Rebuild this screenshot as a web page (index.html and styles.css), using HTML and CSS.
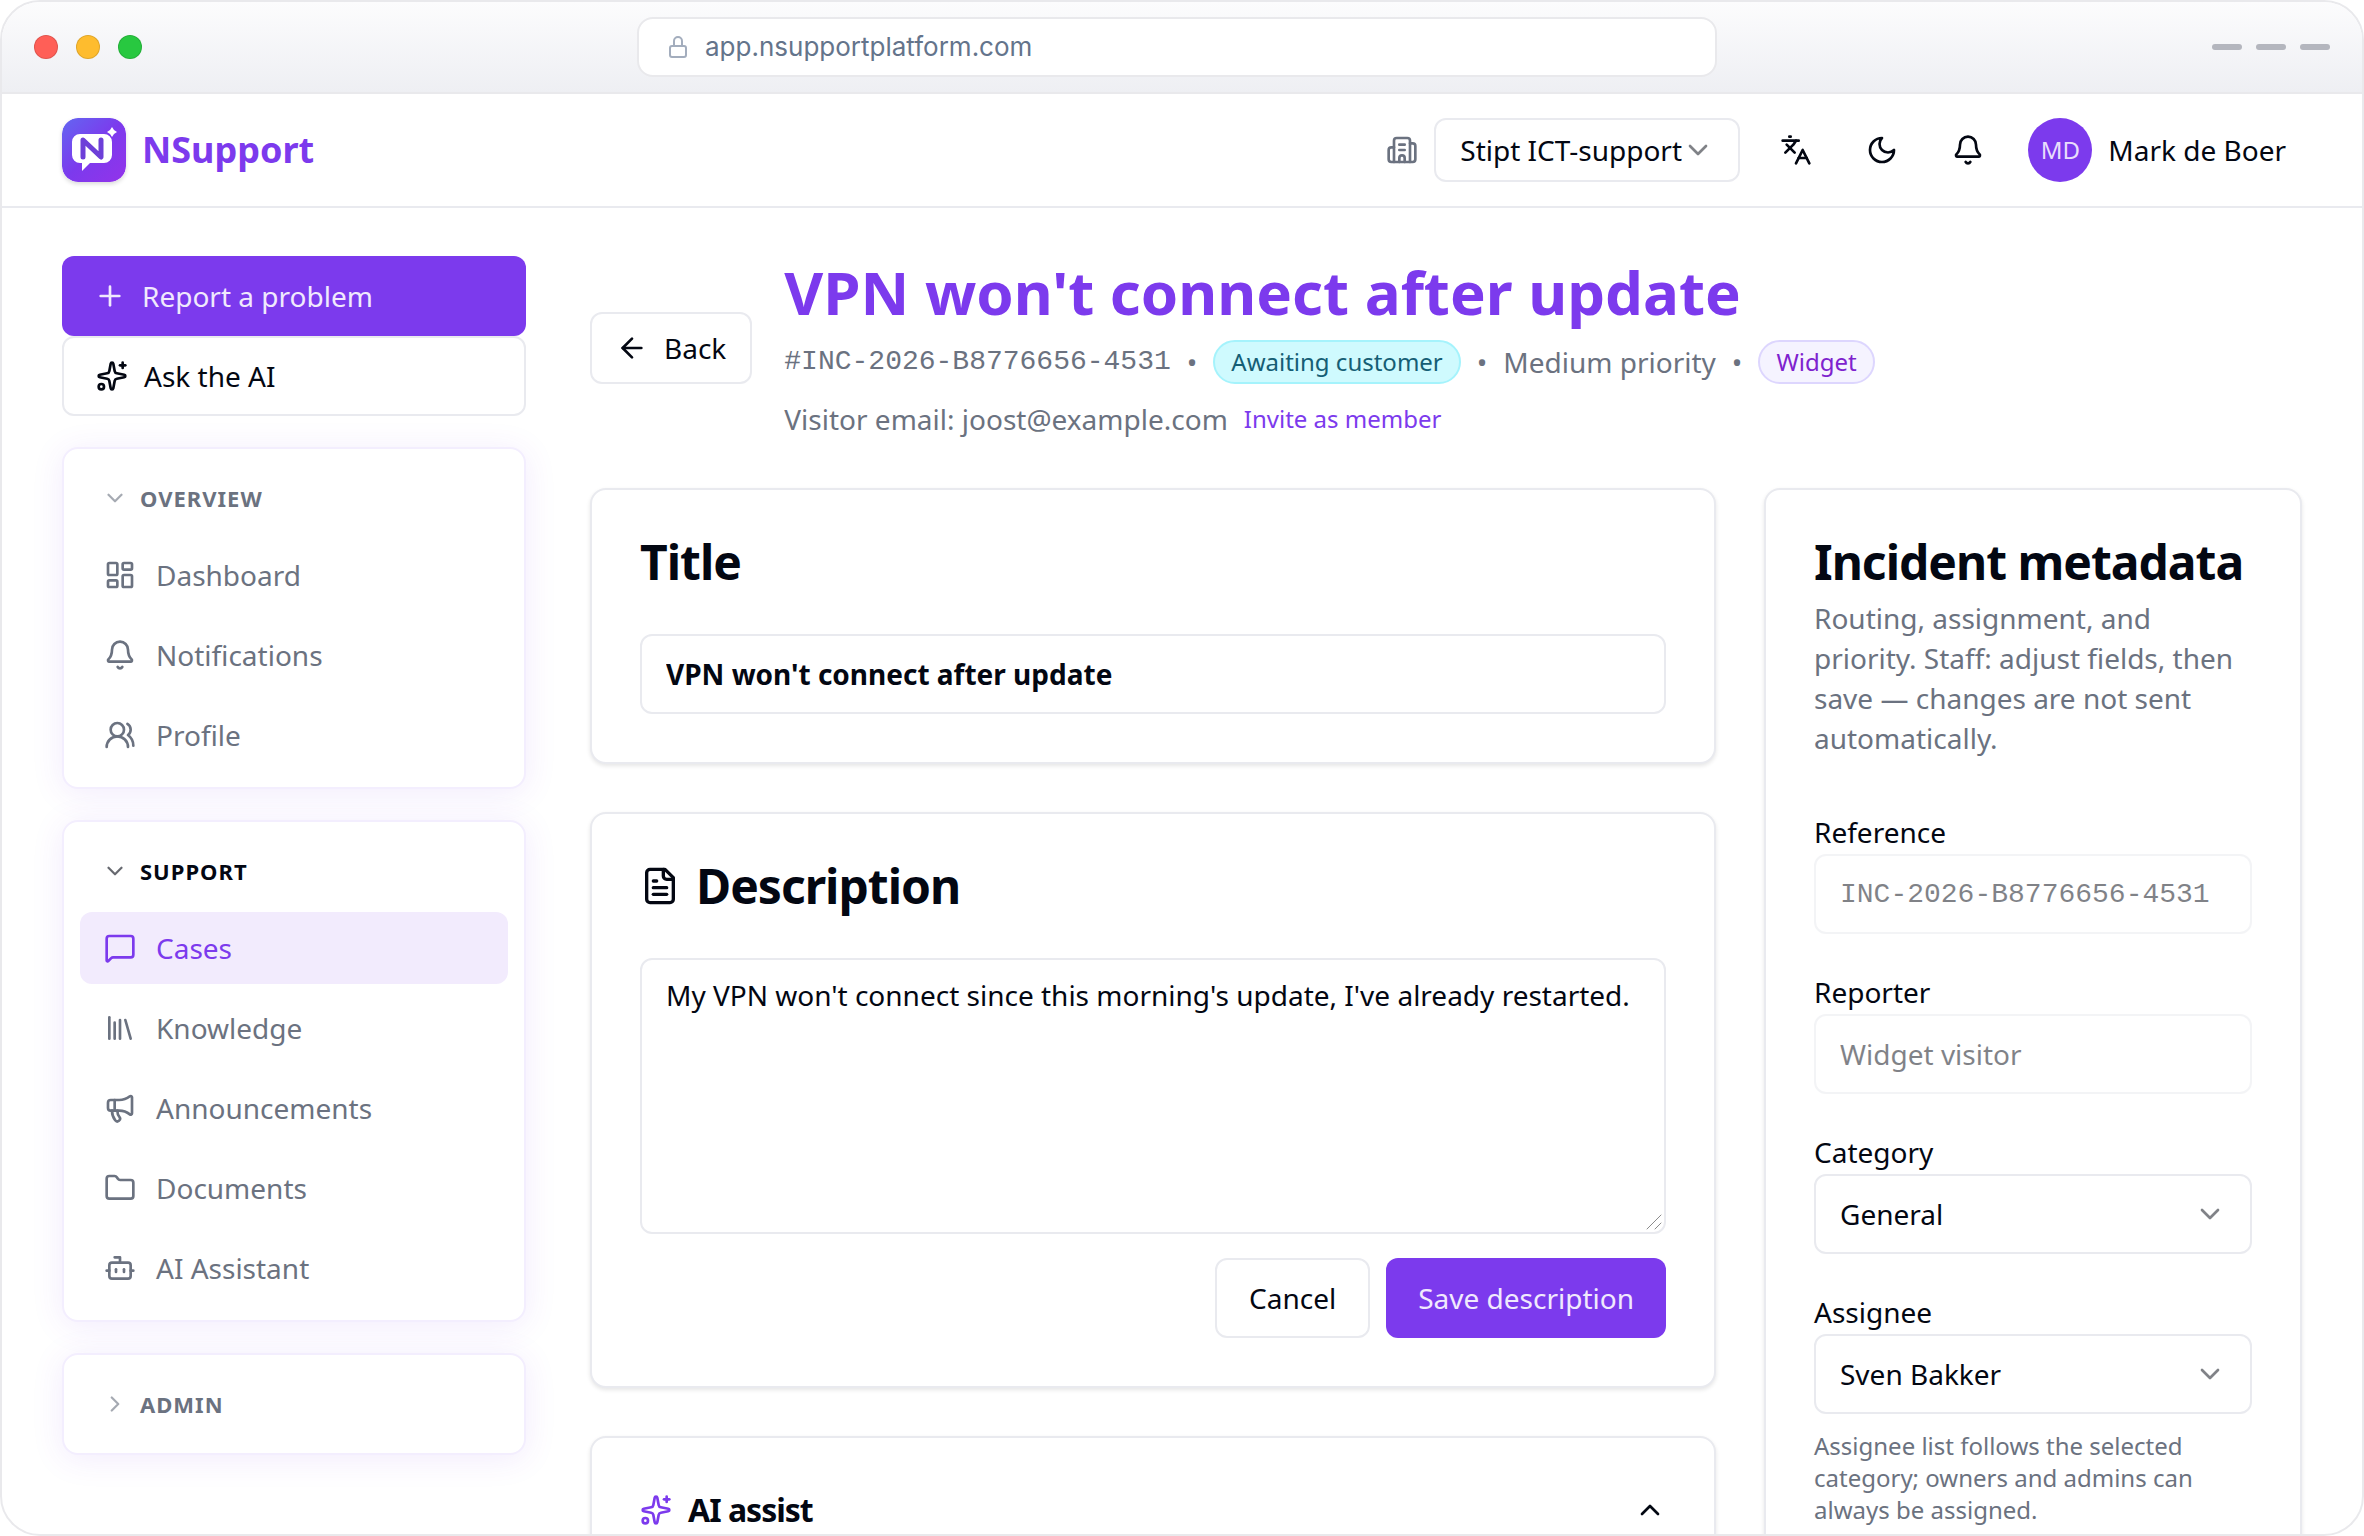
FILE: index.html
```html
<!DOCTYPE html>
<html lang="en">
<head>
    <meta charset="UTF-8">
    <meta name="viewport" content="width=device-width, initial-scale=1.0">
    <title>VPN won't connect after update - NSupport</title>
    <link rel="stylesheet" href="styles.css">
</head>
<body>

    <!-- shared icons -->
    <svg class="sprite" aria-hidden="true">
        <symbol id="i-down" viewBox="0 0 24 24"><path d="m6 9 6 6 6-6"/></symbol>
        <symbol id="i-right" viewBox="0 0 24 24"><path d="m9 18 6-6-6-6"/></symbol>
        <symbol id="i-up" viewBox="0 0 24 24"><path d="m18 15-6-6-6 6"/></symbol>
        <symbol id="i-bell" viewBox="0 0 24 24"><path d="M10.268 21a2 2 0 0 0 3.464 0"/><path d="M3.262 15.326A1 1 0 0 0 4 17h16a1 1 0 0 0 .74-1.673C19.41 13.956 18 12.499 18 8A6 6 0 0 0 6 8c0 4.499-1.411 5.956-2.738 7.326"/></symbol>
        <symbol id="i-sparkles" viewBox="0 0 24 24"><path d="M11.017 2.814a1 1 0 0 1 1.966 0l1.051 5.558a2 2 0 0 0 1.594 1.594l5.558 1.051a1 1 0 0 1 0 1.966l-5.558 1.051a2 2 0 0 0-1.594 1.594l-1.051 5.558a1 1 0 0 1-1.966 0l-1.051-5.558a2 2 0 0 0-1.594-1.594l-5.558-1.051a1 1 0 0 1 0-1.966l5.558-1.051a2 2 0 0 0 1.594-1.594z"/><path d="M20 2v4"/><path d="M22 4h-4"/><circle cx="4" cy="20" r="2"/></symbol>
    </svg>

    <div class="window">
        <div class="titlebar">
            <div class="lights">
                <span class="light red"></span>
                <span class="light yellow"></span>
                <span class="light green"></span>
            </div>
            <div class="address">
                <svg class="lock" viewBox="0 0 18 22" aria-hidden="true"><rect x="1" y="10" width="16" height="11" rx="2"/><path d="M5 10V5a4 4 0 0 1 8 0v5"/></svg>
                <span>app.nsupportplatform.com</span>
            </div>
            <div class="dashes"><span></span><span></span><span></span></div>
        </div>

        <header class="topbar">
            <a class="brand" href="#">
                <svg class="logo" viewBox="0 0 64 64" aria-hidden="true">
                    <defs>
                        <linearGradient id="logoFill" x1="0" y1="0" x2="1" y2="1">
                            <stop offset="0" stop-color="#6366f1"/>
                            <stop offset="0.5" stop-color="#7c3aed"/>
                            <stop offset="1" stop-color="#9333ea"/>
                        </linearGradient>
                    </defs>
                    <rect width="64" height="64" rx="16" fill="url(#logoFill)"/>
                    <path d="M18 16h24a8 8 0 0 1 8 8v13a8 8 0 0 1-8 8H28l-8 8v-8h-2a8 8 0 0 1-8-8V24a8 8 0 0 1 8-8z" fill="#fff"/>
                    <path d="M21 39V22l18 17V22" fill="none" stroke="#6d3fd8" stroke-width="5" stroke-linecap="round" stroke-linejoin="round"/>
                    <path d="M50 9l2 3 3 2-3 2-2 3-2-3-3-2 3-2z" fill="#fff"/>
                </svg>
                NSupport
            </a>
            <div class="tools">
                <svg class="icon muted" viewBox="0 0 24 24" aria-hidden="true"><path d="M10 12h4"/><path d="M10 8h4"/><path d="M14 21v-3a2 2 0 0 0-4 0v3"/><path d="M6 10H4a2 2 0 0 0-2 2v7a2 2 0 0 0 2 2h16a2 2 0 0 0 2-2V9a2 2 0 0 0-2-2h-2"/><path d="M6 21V5a2 2 0 0 1 2-2h8a2 2 0 0 1 2 2v16"/></svg>
                <div class="select org">
                    <select aria-label="Organisation"><option>Stipt ICT-support</option></select>
                    <svg class="icon faint"><use href="#i-down"/></svg>
                </div>
                <button class="tool" aria-label="Language"><svg class="icon" viewBox="0 0 24 24"><path d="m5 8 6 6"/><path d="m4 14 6-6 2-3"/><path d="M2 5h12"/><path d="M7 2h1"/><path d="m22 22-5-10-5 10"/><path d="M14 18h6"/></svg></button>
                <button class="tool" aria-label="Dark mode"><svg class="icon" viewBox="0 0 24 24"><path d="M12 3a6 6 0 0 0 9 9 9 9 0 1 1-9-9Z"/></svg></button>
                <button class="tool" aria-label="Notifications"><svg class="icon"><use href="#i-bell"/></svg></button>
                <button class="user"><span class="avatar">MD</span>Mark de Boer</button>
            </div>
        </header>

        <div class="layout">
            <aside class="sidebar">
                <div class="actions">
                    <button class="btn primary"><svg class="icon" viewBox="0 0 24 24"><path d="M5 12h14"/><path d="M12 5v14"/></svg>Report a problem</button>
                    <button class="btn"><svg class="icon"><use href="#i-sparkles"/></svg>Ask the AI</button>
                </div>

                <nav class="group">
                    <button class="group-head"><svg class="chev"><use href="#i-down"/></svg>OVERVIEW</button>
                    <a class="item" href="#"><svg class="icon" viewBox="0 0 24 24"><rect width="7" height="9" x="3" y="3" rx="1"/><rect width="7" height="5" x="14" y="3" rx="1"/><rect width="7" height="9" x="14" y="12" rx="1"/><rect width="7" height="5" x="3" y="16" rx="1"/></svg>Dashboard</a>
                    <a class="item" href="#"><svg class="icon"><use href="#i-bell"/></svg>Notifications</a>
                    <a class="item" href="#"><svg class="icon" viewBox="0 0 24 24"><path d="M18 21a8 8 0 0 0-16 0"/><circle cx="10" cy="8" r="5"/><path d="M22 20c0-3.370-2-6.500-4-8a5 5 0 0 0-.45-8.300"/></svg>Profile</a>
                </nav>

                <nav class="group">
                    <button class="group-head current"><svg class="chev"><use href="#i-down"/></svg>SUPPORT</button>
                    <a class="item active" href="#"><svg class="icon" viewBox="0 0 24 24"><path d="M22 17a2 2 0 0 1-2 2H6.828a2 2 0 0 0-1.414.586l-2.202 2.202A.71.71 0 0 1 2 21.286V5a2 2 0 0 1 2-2h16a2 2 0 0 1 2 2z"/></svg>Cases</a>
                    <a class="item" href="#"><svg class="icon" viewBox="0 0 24 24"><path d="m16 6 4 14"/><path d="M12 6v14"/><path d="M8 8v12"/><path d="M4 4v16"/></svg>Knowledge</a>
                    <a class="item" href="#"><svg class="icon" viewBox="0 0 24 24"><path d="M11 6a13 13 0 0 0 8.400-2.800A1 1 0 0 1 21 4v12a1 1 0 0 1-1.600.8A13 13 0 0 0 11 14H5a2 2 0 0 1-2-2V8a2 2 0 0 1 2-2z"/><path d="M6 14a12 12 0 0 0 2.400 7.200 2 2 0 0 0 3.200-2.400A8 8 0 0 1 10 14"/><path d="M8 6v8"/></svg>Announcements</a>
                    <a class="item" href="#"><svg class="icon" viewBox="0 0 24 24"><path d="M20 20a2 2 0 0 0 2-2V8a2 2 0 0 0-2-2h-7.900a2 2 0 0 1-1.690-.9L9.600 3.900A2 2 0 0 0 7.930 3H4a2 2 0 0 0-2 2v13a2 2 0 0 0 2 2Z"/></svg>Documents</a>
                    <a class="item" href="#"><svg class="icon" viewBox="0 0 24 24"><path d="M12 8V4H8"/><rect width="16" height="12" x="4" y="8" rx="2"/><path d="M2 14h2"/><path d="M20 14h2"/><path d="M15 13v2"/><path d="M9 13v2"/></svg>AI Assistant</a>
                </nav>

                <nav class="group">
                    <button class="group-head"><svg class="chev"><use href="#i-right"/></svg>ADMIN</button>
                </nav>
            </aside>

            <main class="content">
                <div class="page-head">
                    <button class="btn back"><svg class="icon" viewBox="0 0 24 24"><path d="m12 19-7-7 7-7"/><path d="M19 12H5"/></svg>Back</button>
                    <div>
                        <h1>VPN won't connect after update</h1>
                        <div class="meta">
                            <span class="mono">#INC-2026-B8776656-4531</span>
                            <span>•</span>
                            <span class="badge waiting">Awaiting customer</span>
                            <span>•</span>
                            <span>Medium priority</span>
                            <span>•</span>
                            <span class="badge widget">Widget</span>
                        </div>
                        <div class="visitor">
                            <span>Visitor email: joost@example.com</span>
                            <a href="#">Invite as member</a>
                        </div>
                    </div>
                </div>

                <div class="columns">
                    <div class="stack">
                        <section class="card">
                            <h2><label for="title">Title</label></h2>
                            <input class="field strong" id="title" type="text" value="VPN won't connect after update">
                        </section>

                        <section class="card">
                            <h2><svg class="doc" viewBox="0 0 24 24"><path d="M15 2H6a2 2 0 0 0-2 2v16a2 2 0 0 0 2 2h12a2 2 0 0 0 2-2V7Z"/><path d="M14 2v4a2 2 0 0 0 2 2h4"/><path d="M10 9H8"/><path d="M16 13H8"/><path d="M16 17H8"/></svg><label for="description">Description</label></h2>
                            <div class="editor">
                                <textarea class="field area" id="description">My VPN won't connect since this morning's update, I've already restarted.</textarea>
                                <svg class="grip" viewBox="0 0 16 16" aria-hidden="true"><path d="M1 15 15 1"/><path d="m9 15 6-6"/></svg>
                            </div>
                            <div class="buttons">
                                <button class="btn">Cancel</button>
                                <button class="btn primary">Save description</button>
                            </div>
                        </section>

                        <section class="card">
                            <button class="assist">
                                <svg class="icon violet"><use href="#i-sparkles"/></svg>
                                <span>AI assist</span>
                                <svg class="icon"><use href="#i-up"/></svg>
                            </button>
                        </section>
                    </div>

                    <section class="card metadata">
                        <h2>Incident metadata</h2>
                        <p class="lead">Routing, assignment, and priority. Staff: adjust fields, then save — changes are not sent automatically.</p>
                        <div class="row">
                            <label for="reference">Reference</label>
                            <input class="field mono" id="reference" type="text" value="INC-2026-B8776656-4531" disabled>
                        </div>
                        <div class="row">
                            <label for="reporter">Reporter</label>
                            <input class="field" id="reporter" type="text" value="Widget visitor" disabled>
                        </div>
                        <div class="row">
                            <label for="category">Category</label>
                            <div class="select">
                                <select id="category"><option>General</option></select>
                                <svg class="icon faint"><use href="#i-down"/></svg>
                            </div>
                        </div>
                        <div class="row">
                            <label for="assignee">Assignee</label>
                            <div class="select">
                                <select id="assignee"><option>Sven Bakker</option></select>
                                <svg class="icon faint"><use href="#i-down"/></svg>
                            </div>
                            <p class="hint">Assignee list follows the selected category; owners and admins can always be assigned.</p>
                        </div>
                    </section>
                </div>
            </main>
        </div>
    </div>

</body>
</html>
```
FILE: styles.css
```css
* { margin: 0; padding: 0; box-sizing: border-box; }
:root {
    --violet: #7c3aed;
    --text: #030712;
    --muted: #6b7280;
    --line: #e9eaef;
}
body {
    font-family: "Noto Sans", sans-serif;
    font-size: 28px;
    line-height: 38px;
    color: var(--text);
    background: #fff;
}
button, input, select, textarea { font: inherit; color: inherit; }
button { cursor: pointer; background: none; border: none; }
a { color: inherit; text-decoration: none; }
svg {
    flex-shrink: 0;
    fill: none;
    stroke: currentColor;
    stroke-width: 2;
    stroke-linecap: round;
    stroke-linejoin: round;
}
.sprite { display: none; }
.icon { width: 32px; height: 32px; }
.muted { color: var(--muted); }
.faint { opacity: 0.5; }
.violet { color: var(--violet); }
.mono { font-family: "Liberation Mono", monospace; }

/* browser frame */
.window {
    height: 100vh;
    overflow: hidden;
    border: 2px solid #e9e9ec;
    border-radius: 40px;
    background: #fff;
}
.titlebar {
    display: flex;
    justify-content: space-between;
    align-items: center;
    height: 92px;
    padding: 0 32px;
    background: linear-gradient(#fcfcfd, #eeeff3);
    border-bottom: 2px solid #e9e9ec;
}
.lights { display: flex; gap: 18px; }
.light { width: 24px; height: 24px; border-radius: 50%; border: 1px solid rgba(0, 0, 0, 0.12); }
.red { background: #ff5f57; }
.yellow { background: #febc2e; }
.green { background: #28c840; }
.address {
    display: flex;
    align-items: center;
    gap: 18px;
    width: 1080px;
    height: 60px;
    padding: 0 30px;
    border: 2px solid #e9e9ec;
    border-radius: 16px;
    background: #fff;
    font-family: Inter, sans-serif;
    font-size: 26px;
    color: #64748b;
}
.lock { width: 18px; height: 22px; color: #a3adbd; }
.dashes { display: flex; gap: 14px; }
.dashes span { width: 30px; height: 6px; border-radius: 3px; background: #b4b6be; }

/* top bar */
.topbar {
    display: flex;
    justify-content: space-between;
    align-items: center;
    height: 114px;
    padding: 0 60px;
    border-bottom: 2px solid var(--line);
}
.brand { display: flex; align-items: center; gap: 16px; font-size: 36px; font-weight: 700; color: var(--violet); }
.logo { width: 64px; height: 64px; stroke: none; border-radius: 16px; box-shadow: 0 2px 4px rgba(0, 0, 0, 0.15); }
.tools { display: flex; align-items: center; }
.tool { display: grid; place-items: center; width: 72px; height: 72px; margin-right: 14px; }
.user { display: flex; align-items: center; gap: 16px; padding: 0 16px 0 10px; }
.avatar {
    display: grid;
    place-items: center;
    width: 64px;
    height: 64px;
    border-radius: 50%;
    background: var(--violet);
    color: #e9defc;
    font-size: 24px;
}
.select { display: grid; align-items: center; }
.select select, .select svg { grid-area: 1 / 1; }
.select svg { justify-self: end; margin-right: 26px; pointer-events: none; }
.select select {
    appearance: none;
    width: 100%;
    height: 80px;
    padding: 0 24px;
    border: 2px solid var(--line);
    border-radius: 12px;
    background: #fff;
}
.org { margin: 0 20px 0 16px; }
.org select { height: 64px; padding-right: 56px; }

/* sidebar */
.layout { display: flex; gap: 64px; padding: 48px 60px; }
.sidebar { display: flex; flex-direction: column; gap: 31px; width: 464px; flex-shrink: 0; }
.actions { display: flex; flex-direction: column; }
.btn {
    display: flex;
    align-items: center;
    gap: 16px;
    height: 80px;
    padding: 0 32px;
    border: 2px solid var(--line);
    border-radius: 12px;
    background: #fff;
}
.btn.primary { border: none; background: var(--violet); color: #f0e9fd; }
.group {
    display: flex;
    flex-direction: column;
    gap: 8px;
    padding: 16px;
    border: 2px solid #f3eefe;
    border-radius: 16px;
    background: #fff;
    box-shadow: 0 4px 32px rgba(124, 58, 237, 0.1);
}
.group-head {
    display: flex;
    align-items: center;
    gap: 12px;
    height: 66px;
    padding: 0 22px;
    font-size: 22px;
    font-weight: 700;
    letter-spacing: 1px;
    color: var(--muted);
}
.group-head.current { color: var(--text); }
.chev { width: 26px; height: 26px; opacity: 0.6; }
.item {
    display: flex;
    align-items: center;
    gap: 20px;
    height: 72px;
    padding: 0 24px;
    border-radius: 12px;
    color: var(--muted);
}
.item.active { background: #f2ebfd; color: var(--violet); }

/* case page */
.content { flex: 1; min-width: 0; }
.page-head { display: flex; align-items: center; gap: 32px; margin-bottom: 48px; }
.back { height: 72px; padding: 0 24px; }
h1 { font-size: 60px; line-height: 72px; font-weight: 700; color: var(--violet); }
.meta { display: flex; align-items: center; gap: 16px; margin: 12px 0 16px; height: 44px; color: var(--muted); }
.badge { padding: 0 16px; border: 2px solid; border-radius: 22px; font-size: 24px; line-height: 40px; }
.waiting { background: #cffafe; border-color: #a5f3fc; color: #155e75; }
.widget { background: #f5f3ff; border-color: #ddd6fe; color: #7e22ce; }
.visitor { display: flex; gap: 16px; height: 40px; color: var(--muted); }
.visitor a { font-size: 24px; color: var(--violet); }

.columns { display: grid; grid-template-columns: 1fr 538px; gap: 48px; }
.stack { display: flex; flex-direction: column; gap: 48px; }
.card {
    padding: 48px;
    border: 2px solid var(--line);
    border-radius: 16px;
    background: #fff;
    box-shadow: 0 2px 4px rgba(0, 0, 0, 0.1);
}
h2 {
    display: flex;
    align-items: center;
    gap: 16px;
    font-size: 48px;
    line-height: 48px;
    font-weight: 700;
    letter-spacing: -1px;
    margin-bottom: 48px;
}
.doc { width: 40px; height: 40px; }
.doc + label { padding-left: 0; }
.field {
    display: block;
    width: 100%;
    height: 80px;
    padding: 0 24px;
    border: 2px solid var(--line);
    border-radius: 12px;
    background: #fff;
}
.field:disabled { opacity: 0.5; }
.strong { font-weight: 700; }
.editor { display: grid; }
.editor > * { grid-area: 1 / 1; }
.area { height: 276px; padding: 16px 24px; resize: none; }
.grip { width: 16px; height: 16px; margin: 4px; place-self: end; color: #8a8a8a; stroke-width: 1; pointer-events: none; }
.buttons { display: flex; justify-content: flex-end; gap: 16px; margin-top: 24px; }
.assist { display: flex; align-items: center; gap: 16px; width: 100%; height: 48px; font-size: 32px; font-weight: 700; letter-spacing: -1px; }
.assist span { flex: 1; text-align: left; }

.metadata h2 { margin-bottom: 12px; white-space: nowrap; }
.lead { margin-bottom: 60px; line-height: 40px; color: var(--muted); }
.row { margin-bottom: 44px; }
.row label { display: block; line-height: 28px; margin-bottom: 8px; }
.hint { margin-top: 16px; font-size: 24px; line-height: 32px; color: var(--muted); }
```
